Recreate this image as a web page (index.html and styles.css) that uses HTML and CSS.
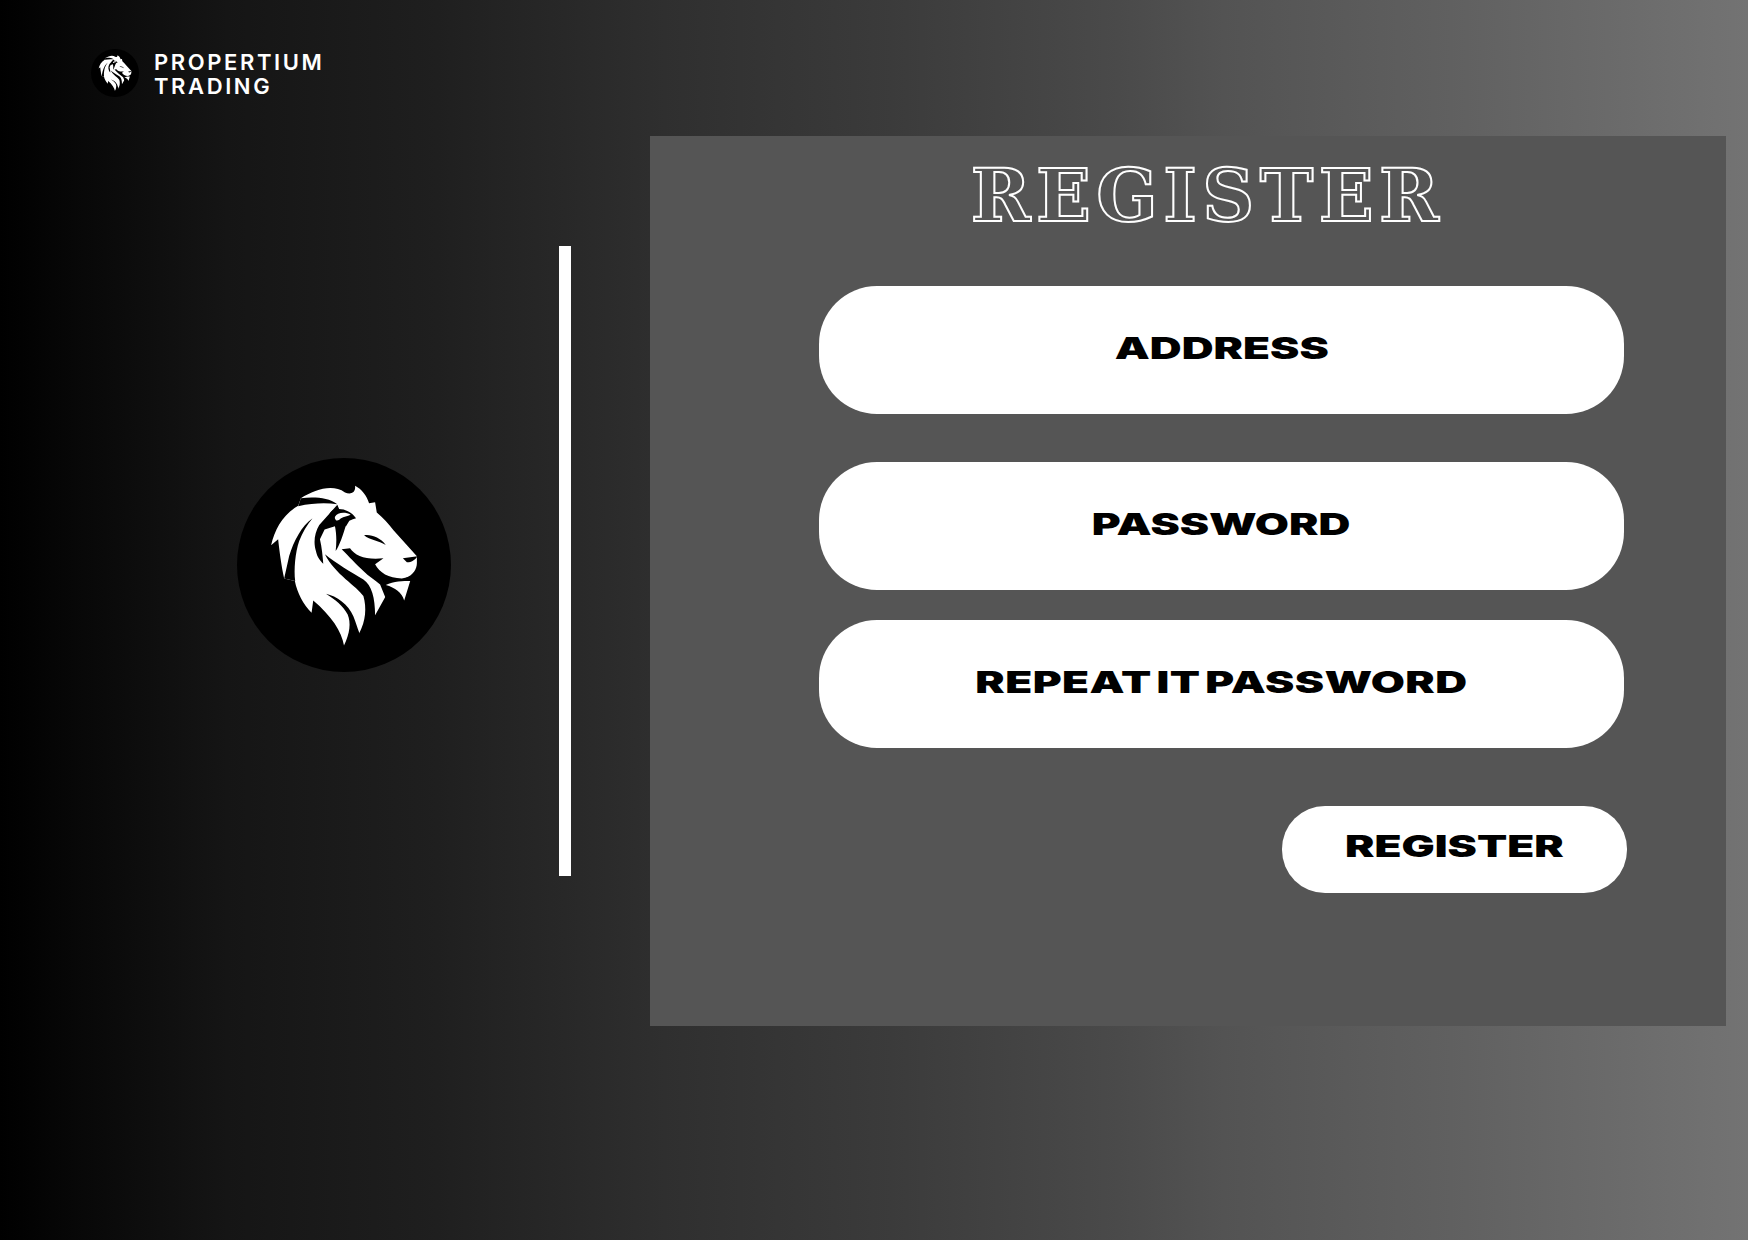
FILE: index.html
```html
<!DOCTYPE html>
<html lang="en">
<head>
<meta charset="utf-8">
<title>Propertium Trading - Register</title>
<link rel="stylesheet" href="styles.css">
</head>
<body>
<svg class="defs" width="0" height="0" aria-hidden="true">
  <defs>
  <g id="lion">
    <circle cx="372" cy="372" r="320" fill="#000"/>
    <path fill="#fff" d="M243 172C285 148 335 128 375 155C390 162 408 158 405 135C425 145 440 165 447 187L465 184L470 215C490 232 505 248 520 268L590 346L590 366C590 385 578 402 558 410L497 440L497 465L465 522L418 575L372 613C365 570 335 525 280 478L275 515C250 490 232 455 225 420L193 412C185 375 180 340 175 295L154 313C165 265 190 220 235 195Z"/>
    <path fill="#000" d="M243 172C285 168 325 170 352 190C320 186 280 186 235 196Z"/>
    <path fill="#000" d="M278 232C245 255 222 300 208 345L193 412L226 420C222 385 226 335 238 300C248 275 262 250 278 232Z"/>
    <path fill="#000" d="M352 192L298 252C284 275 280 305 288 330C292 350 302 360 310 368C308 345 306 320 300 295L314 266L345 256C350 280 350 305 347 330C358 315 370 280 378 252Z"/>
    <path fill="#000" d="M408 232C392 208 360 198 338 208C322 220 325 240 340 250L378 256L388 240C395 236 402 234 408 232Z"/>
    <path fill="#fff" d="M345 228C352 215 375 212 392 222C382 226 372 228 362 233C358 238 352 240 348 238C345 235 344 232 345 228Z"/>
    <path fill="#000" d="M432 283C455 280 480 290 497 312C475 298 450 298 432 283Z"/>
    <path fill="#000" d="M548 352L592 346C585 358 570 365 560 364Z"/>
    <path fill="#000" d="M390 322C405 345 440 358 490 352L465 370C478 395 505 412 545 412L600 400L600 440L500 480L480 430C465 418 445 405 430 390C410 372 385 345 365 325Z"/>
    <path fill="#fff" d="M497 432C520 420 550 420 570 420L552 478C545 455 525 440 497 432Z"/>
    <path fill="#000" d="M315 340C345 365 395 395 430 415C455 432 465 470 465 522L500 540L418 575C437 540 440 500 430 465C410 435 345 400 315 340Z"/>
    <path fill="#000" d="M318 458C350 465 385 490 400 525C408 545 412 560 418 575L400 620L372 613C390 575 393 545 383 520C370 495 345 475 318 458Z"/>
  </g>
  </defs>
</svg>
<div class="page">
  <header class="brand">
    <svg class="brand-mark" viewBox="52 52 640 640" aria-hidden="true"><use href="#lion"/></svg>
    <div class="brand-name">PROPERTIUM<br>TRADING</div>
  </header>
  <main class="layout">
    <aside class="side">
      <svg class="hero-mark" viewBox="52 52 640 640" aria-hidden="true"><use href="#lion"/></svg>
      <div class="divider"></div>
    </aside>
    <section class="panel">
      <h1 class="title">REGISTER</h1>
      <div class="fields">
        <div class="field field-address"><span class="wide">ADDRESS</span></div>
        <div class="field field-password"><span class="wide">PASSWORD</span></div>
        <div class="field"><span class="wide tight">REPEAT IT PASSWORD</span></div>
      </div>
      <div class="actions">
        <button class="submit" type="button"><span class="wide">REGISTER</span></button>
      </div>
    </section>
  </main>
</div>
</body>
</html>
```
FILE: styles.css
```css
* { box-sizing: border-box; }
html, body { margin: 0; height: 100%; }
body {
  width: 1748px;
  height: 1240px;
  overflow: hidden;
  background: linear-gradient(90deg, #000 0%, #0a0a0a 6%, #151515 13%, #1f1f1f 25%, #2f2f2f 38%, #3b3b3b 51%, #4a4a4a 64%, #535353 70%, #606060 83%, #737373 100%);
  font-family: "Inter", "Liberation Sans", sans-serif;
}
.defs { position: absolute; }
.page { padding: 48px 22px 0 0; display: flex; flex-direction: column; }
.brand { display: flex; align-items: center; gap: 15px; margin-left: 91px; height: 50px; }
.brand-mark { width: 48px; height: 48px; }
.brand-name {
  color: #fff;
  font-size: 22px;
  font-weight: 600;
  line-height: 24px;
  letter-spacing: 2.6px;
  padding-top: 2px;
}
.layout { display: flex; margin-top: 38px; }
.side { width: 650px; flex: none; display: flex; align-items: flex-start; }
.hero-mark { width: 214px; height: 214px; margin: 322px 0 0 237px; flex: none; }
.divider { width: 12.5px; height: 630px; margin: 110px 0 0 107.5px; background: #fff; }
.panel { width: 1076px; height: 890px; background: #555; padding: 0 102px 0 169px; }
.title {
  margin: 24px 0 0 -28px;
  height: 72px;
  text-align: center;
  font-family: "DejaVu Serif", serif;
  font-size: 72px;
  line-height: 72px;
  font-weight: 700;
  color: #555;
  -webkit-text-stroke: 2px #fff;
  letter-spacing: 5.4px;
}
.fields { margin-top: 54px; display: flex; flex-direction: column; gap: 30px; }
.field {
  height: 128px;
  background: #fff;
  border-radius: 58px;
  display: flex;
  justify-content: center;
  padding-top: 47px;
}
.field-address { margin-bottom: 18px; }
.wide {
  display: inline-block;
  color: #000;
  font-size: 30px;
  font-weight: 900;
  line-height: 30px;
  transform: scaleX(1.47);
}
.tight { letter-spacing: 0.3px; word-spacing: -3px; }
.actions { display: flex; justify-content: flex-end; margin: 58px -3px 0 0; }
.submit {
  width: 345px;
  height: 87px;
  border: 0;
  border-radius: 43px;
  background: #fff;
  padding: 0 0 8px;
  font: inherit;
}
```
